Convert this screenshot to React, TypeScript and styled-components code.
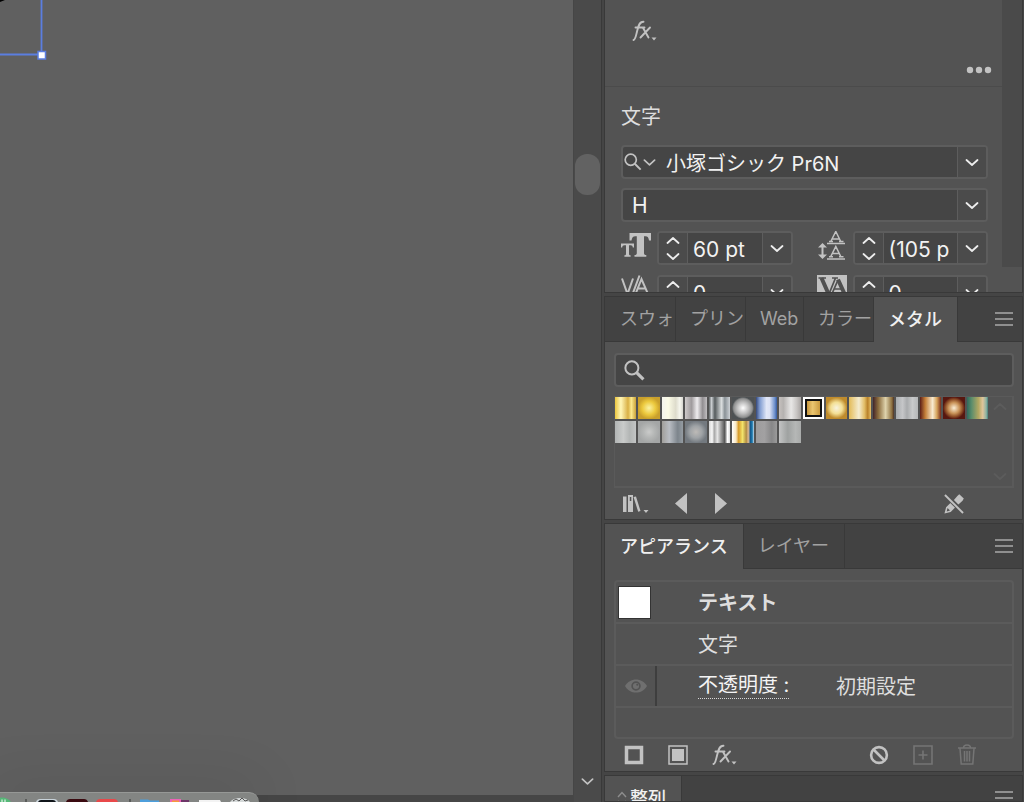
import React from "react";
import styled, { createGlobalStyle } from "styled-components";

const c = {
  canvas: "#606060",
  panel: "#535353",
  tabs: "#424242",
  gutter: "#454545",
  line: "#393939",
  edge: "#5d5d5d",
  field: "#454545",
  track: "#4a4a4a",
  icon: "#c2c2c2",
  text: "#dedede",
  dim: "#a2a2a2",
};

const GlobalStyle = createGlobalStyle`
  * { box-sizing: border-box; }
  body {
    margin: 0;
    background: ${c.canvas};
    color: ${c.text};
    font: 20px/28px Inter, "Noto Sans CJK JP", sans-serif;
  }
  svg { display: block; flex: none; }
  button, input, select { font: inherit; color: inherit; margin: 0; }
  h2 { margin: 0; font: inherit; }
`;

const Workspace = styled.div`
  display: flex;
  height: 100vh;
  overflow: hidden;
`;

const CanvasColumn = styled.main`
  flex: 1;
  min-width: 0;
  display: flex;
  flex-direction: column;
  position: relative;
  overflow: hidden;
`;

const Artboard = styled.div`
  flex: 1;
  background: ${c.canvas};
`;

const StatusStrip = styled.div`
  height: 7px;
  background: #464646;
`;

const Selection = styled.svg`
  position: absolute;
  left: 0;
  top: 0;
`;

const SystemDock = styled.div`
  position: absolute;
  left: -14px;
  bottom: 0;
  width: 273px;
  height: 10px;
  border-radius: 10px 10px 0 0;
  background: #838583;
  border-top: 1px solid #969896;
  box-shadow: 0 0 56px rgba(0, 0, 0, 0.3);
`;

const CanvasScroll = styled.div`
  width: 28px;
  flex: none;
  display: flex;
  flex-direction: column;
  justify-content: space-between;
  align-items: center;
  background: ${c.track};
  border-left: 1px solid #464646;
  padding: 154px 0 17px;
`;

const ScrollThumb = styled.div`
  width: 25px;
  height: 41px;
  border-radius: 12px;
  background: #626262;
`;

const PanelDock = styled.aside`
  width: 423px;
  flex: none;
  display: flex;
  flex-direction: column;
  gap: 3px;
  padding: 0 1px 0 2px;
  background: ${c.gutter};
  border-left: 1px solid ${c.line};
`;

const Panel = styled.section<{ $fill?: boolean }>`
  flex: ${(p) => (p.$fill ? "1 0 0" : "none")};
  min-height: 0;
  overflow: hidden;
  border: 1px solid ${c.line};
  background: ${c.panel};
`;

const PropertiesPanel = styled(Panel)`
  display: flex;
  height: 293px;
  border-top: 0;
`;

const PropertiesContent = styled.div`
  flex: 1;
  min-width: 0;
`;

const PropertiesScroll = styled.div`
  width: 20px;
  height: 267px;
  background: ${c.track};
`;

const EffectSection = styled.div`
  display: flex;
  flex-direction: column;
  align-items: flex-start;
  justify-content: space-between;
  height: 87px;
  padding: 20px 10px 12px 27px;
  border-bottom: 1px solid #4b4b4b;
`;

const CharacterSection = styled.div`
  display: flex;
  flex-direction: column;
  gap: 9px;
  padding: 16px 14px 0 16px;
`;

const SectionTitle = styled.h2`
  margin-bottom: 5px;
`;

const IconButton = styled.button<{ $end?: boolean; $push?: boolean }>`
  display: flex;
  align-items: center;
  justify-content: center;
  align-self: ${(p) => (p.$end ? "flex-end" : "auto")};
  margin-left: ${(p) => (p.$push ? "auto" : "0")};
  padding: 0;
  border: 0;
  background: none;
  color: ${c.icon};
  &:disabled { color: #757575; }
`;

const Field = styled.div`
  display: flex;
  flex: 1;
  min-width: 0;
  min-height: 34px;
  border: 2px solid ${c.edge};
  border-radius: 4px;
  background: ${c.field};
  overflow: hidden;
  color: #f2f2f2;
`;

const FieldInput = styled.input<{ $large?: boolean }>`
  flex: 1;
  min-width: 0;
  width: 0;
  height: 30px;
  border: 0;
  outline: 0;
  background: transparent;
  padding: ${(p) => (p.$large ? "3px 0 0 5px" : "0 0 0 10px")};
  font-size: ${(p) => (p.$large ? "21px" : "20px")};
`;

const StyleSelect = styled.select`
  flex: 1;
  min-width: 0;
  height: 30px;
  appearance: none;
  border: 0;
  outline: 0;
  background: transparent;
  padding: 1px 0 0 9px;
  font-size: 21px;
`;

const Addon = styled.button<{ $start?: boolean }>`
  display: flex;
  flex-direction: column;
  gap: 9px;
  align-items: center;
  justify-content: center;
  width: 29px;
  flex: none;
  padding: 0;
  border: 0 solid ${c.edge};
  border-width: ${(p) => (p.$start ? "0 1px 0 0" : "0 0 0 1px")};
  background: #4b4b4b;
  color: #ededed;
`;

const FontFilter = styled(IconButton)`
  width: 33px;
  gap: 1px;
`;

const MetricGrid = styled.div`
  display: grid;
  grid-template-columns: 1fr 1fr;
  gap: 10px 24px;
`;

const Metric = styled.label`
  display: flex;
  align-items: center;
  gap: 6px;
  color: ${c.icon};
`;

const TabBar = styled.div`
  display: flex;
  height: 45px;
  background: ${c.tabs};
`;

const TabRest = styled.div`
  flex: 1;
  display: flex;
  align-items: center;
  justify-content: flex-end;
  padding-right: 9px;
  border-bottom: 1px solid ${c.line};
`;

const Tab = styled.button<{ $active?: boolean; $tight?: boolean }>`
  display: flex;
  align-items: center;
  gap: 3px;
  min-width: 58px;
  padding: ${(p) => (p.$tight ? "0 1px 0 14px" : "0 15px 0 14px")};
  border: 0 solid ${c.line};
  border-width: ${(p) => (p.$active ? "0 1px 0 0" : "0 1px 1px 0")};
  background: ${(p) => (p.$active ? c.panel : c.tabs)};
  color: ${(p) => (p.$active ? "#f0f0f0" : c.dim)};
  font-size: 18px;
  font-weight: ${(p) => (p.$active ? 500 : 400)};
  white-space: nowrap;
  &:first-child { padding-left: 15px; }
`;

const CompactTab = styled(Tab)`
  &:first-child { padding-left: 12px; }
`;

const SwatchBody = styled.div`
  padding: 11px 8px 0 9px;
`;

const SearchField = styled.label`
  display: flex;
  align-items: center;
  height: 34px;
  padding-left: 8px;
  border: 2px solid ${c.edge};
  border-radius: 4px;
  background: ${c.field};
  color: ${c.icon};
`;

const SwatchBox = styled.div`
  display: flex;
  justify-content: space-between;
  height: 92px;
  margin-top: 9px;
  border: 2px solid #5a5a5a;
  border-left-width: 1px;
  border-top-width: 1px;
`;

const SwatchGrid = styled.div`
  flex: 1;
  display: grid;
  grid-template-columns: repeat(16, 1fr);
  grid-auto-rows: 22px;
  gap: 2px;
  align-content: start;
`;

const Swatch = styled.button<{ $paint: string; $selected?: boolean }>`
  padding: 0;
  border: ${(p) => (p.$selected ? "2px solid #fff" : "0")};
  box-shadow: ${(p) => (p.$selected ? "inset 0 0 0 2px #111" : "none")};
  background: ${(p) => p.$paint};
`;

const SwatchScroll = styled.div`
  width: 24px;
  display: flex;
  flex-direction: column;
  justify-content: space-between;
  align-items: center;
  padding: 6px 0;
  color: #5c5c5c;
`;

const PanelFooter = styled.div`
  display: flex;
  align-items: center;
  height: 31px;
`;

const SwatchFooter = styled(PanelFooter)`
  gap: 26px;
  padding: 0 58px 0 17px;
`;

const AppearanceFooter = styled(PanelFooter)`
  gap: 24px;
  padding: 0 45px 0 19px;
`;

const AppearanceBody = styled.div`
  padding: 11px 8px 0 9px;
`;

const AppearancePanel = styled(Panel)`
  padding-bottom: 1px;
`;

const AppearanceList = styled.div`
  border: 2px solid #5b5b5b;
  border-radius: 4px;
`;

const AppearanceRow = styled.div<{ $last?: boolean }>`
  display: grid;
  grid-template-columns: 41px 41px 138px 1fr;
  align-items: center;
  height: ${(p) => (p.$last ? "29px" : "42px")};
  border-bottom: ${(p) => (p.$last ? "0" : "2px solid #5b5b5b")};
`;

const Thumb = styled.span`
  width: 33px;
  height: 33px;
  margin-left: 2px;
  border: 1px solid #333;
  background: #fff;
`;

const Visibility = styled(IconButton)`
  align-self: stretch;
  border-right: 2px solid #3e3e3e;
  color: #6f6f6f;
`;

const RowName = styled.span<{ $bold?: boolean }>`
  grid-column: 3;
  padding-top: 2px;
  font-weight: ${(p) => (p.$bold ? 700 : 400)};
  white-space: nowrap;
`;

const RowValue = styled.span`
  padding-top: 2px;
`;

const OpacityLink = styled.a`
  grid-column: 3;
  justify-self: start;
  display: flex;
  line-height: 25px;
  color: #f4f4f4;
  text-decoration: none;
  border-bottom: 1px dotted #d8d8d8;
`;

const Chevron = ({ up = false, size = 14 }: { up?: boolean; size?: number }) => (
  <svg width={size} height="7" viewBox="0 0 14 7" fill="none" stroke="currentColor" strokeWidth="1.8" strokeLinecap="round" strokeLinejoin="round">
    <path d={up ? "M1.5 6 7 1l5.500 5" : "M1.500 1 7 6l5.500-5"} />
  </svg>
);

const Fx = () => (
  <svg width="26" height="22" viewBox="0 0 26 22" fill="none" stroke="currentColor" strokeWidth="1.900" strokeLinecap="round">
    <path d="M1.500 20C3.500 19.500 4 15.500 5 11.500S7 1.500 11.500 1.700M3.500 7.500h9M10.800 7.500l5.700 10M18 7.500 8.500 17.500" />
    <path d="M19.500 17.500h5L22 20.500z" fill="currentColor" stroke="none" />
  </svg>
);

const Dots = () => (
  <svg width="26" height="8" viewBox="0 0 26 8" fill="currentColor">
    <circle cx="4" cy="4" r="3.200" /><circle cx="13" cy="4" r="3.200" /><circle cx="22" cy="4" r="3.200" />
  </svg>
);

const Lens = ({ heavy = false }: { heavy?: boolean }) => (
  <svg width={heavy ? 21 : 18} height={heavy ? 21 : 18} viewBox="0 0 20 20" fill="none" stroke="currentColor" strokeWidth="1.900">
    <circle cx="7.500" cy="7.500" r="6.200" />
    <path d="m12 12 6.500 6.500" strokeWidth={heavy ? 3 : 2.200} />
  </svg>
);

const Menu = () => (
  <svg width="18" height="14" viewBox="0 0 18 14" stroke="#a9a9a9" strokeWidth="1.600">
    <path d="M0 1h18M0 7h18M0 13h18" />
  </svg>
);

const FontSizeIcon = () => (
  <svg width="30" height="34" viewBox="0 0 30 34" fill="currentColor">
    <path d="M8.500 2H30v7.500h-2C27.600 6.600 26.800 5.200 24.500 5.200H23V22c0 1.600.6 2 2.300 2v1.700H13.500V24c1.700 0 2.300-.4 2.300-2V5.200h-1.500c-2.300 0-3.400 1.400-3.800 4.300h-2z" />
    <path d="M0 12.500h13v4h-1.200c-.2-1.500-.7-2.200-2.200-2.200H8V23c0 1 .4 1.300 1.600 1.300v1.400H3.400v-1.400c1.200 0 1.600-.3 1.600-1.300v-8.700H3.400c-1.500 0-2 .7-2.200 2.200H0z" />
  </svg>
);

const LeadingIcon = () => (
  <svg width="30" height="34" viewBox="0 3 30 34" fill="none" stroke="currentColor" strokeWidth="1.500">
    <path d="M10 15.500h18M10 31h18M13.500 14 18.800 3.500 24 14M15 11h7.500M12 13.500h4M22 13.500h4.500M13.500 29 18.800 18.500 24 29M15 25.500h7.500M12 28.800h4M22 28.800h4.500" />
    <path d="M5.500 17v11" strokeWidth="2" />
    <path d="m1 19.500 4.500-4.500 4.500 4.500zM1 26.500l4.500 4.500 4.500-4.500z" fill="currentColor" stroke="none" />
  </svg>
);

const KerningIcon = () => (
  <svg width="30" height="34" viewBox="0 0 30 34" fill="none" stroke="currentColor" strokeWidth="2">
    <path d="m1 3.500 5.500 15.500 5.500-15.500M10.500 22 18.500 0.500M14.500 19 20.500 4 27 19M16.500 13.500h8" />
  </svg>
);

const TrackingIcon = () => (
  <svg width="30" height="34" viewBox="0 0 30 34">
    <path d="M0 0h30v28H0z" fill="currentColor" />
    <path d="m4.500 3 7.500 17M21 4.500 28.500 21" stroke="#505050" strokeWidth="4" />
    <path d="m12 19 6.500-16M14 21l7-16M17 14h9M1.500 3h7.500M15 3h6" stroke="#505050" strokeWidth="1.700" />
  </svg>
);

const LibraryIcon = () => (
  <svg width="27" height="18" viewBox="0 0 27 18" fill="currentColor">
    <path d="M1 1.500h3.500V17H1zM6 0h5v17H6zM11.500 2l2.500-.6L18.500 16l-2.300.8zM21.500 15h5L24 18z" />
    <path d="M7.800 2h1.500v4H7.800z" fill={c.panel} />
  </svg>
);

const Triangle = ({ right = false }: { right?: boolean }) => (
  <svg width="13" height="21" viewBox="0 0 13 21" fill="currentColor">
    <path d={right ? "M1 0 13 10.500 1 21z" : "M12 0 0 10.500 12 21z"} />
  </svg>
);

const NoEditIcon = () => (
  <svg width="20" height="20" viewBox="0 0 21 21" fill="currentColor">
    <path d="m14 2 2-1.800 4.800 4.500-1.300 2.300-4.400 4-4.700-4.700zM8.300 8 13.200 12.700 7 18.800.5 20.500 2.200 14z" />
    <path d="m3.700 14.800 2.600 2.600-3.500 1z" fill={c.panel} />
    <path d="m1 1 19 19" stroke={c.panel} strokeWidth="4" />
    <path d="m1 1 19 19" stroke="currentColor" strokeWidth="2" />
  </svg>
);

const EyeIcon = () => (
  <svg width="22" height="14" viewBox="0 0 22 14">
    <path d="M0 7C5-1.800 17-1.800 22 7c-5 8.800-17 8.800-22 0z" fill="currentColor" />
    <circle cx="11" cy="7" r="3.900" fill="none" stroke={c.panel} strokeWidth="1.700" />
    <circle cx="12.200" cy="5.800" r="1" fill={c.panel} />
  </svg>
);

const StrokeIcon = () => (
  <svg width="20" height="20" viewBox="0 0 20 20" fill="none" stroke="currentColor">
    <path d="M2.500 2.500h15v15h-15z" strokeWidth="3.500" />
  </svg>
);

const FillIcon = () => (
  <svg width="20" height="20" viewBox="0 0 20 20" fill="none" stroke="currentColor" strokeWidth="1.500">
    <path d="M1 1h18v18H1z" />
    <path d="M4 4h12v12H4z" fill="currentColor" stroke="none" />
  </svg>
);

const ClearIcon = () => (
  <svg width="20" height="20" viewBox="0 0 20 20" fill="none" stroke="currentColor" strokeWidth="2.600">
    <circle cx="10" cy="10" r="7.900" /><path d="m4.500 4.500 11 11" />
  </svg>
);

const AddIcon = () => (
  <svg width="20" height="20" viewBox="0 0 20 20" fill="none" stroke="currentColor" strokeWidth="1.600">
    <path d="M1 1h18v18H1zM10 5.500v9M5.500 10h9" />
  </svg>
);

const TrashIcon = () => (
  <svg width="20" height="21" viewBox="0 0 20 21" fill="none" stroke="currentColor" strokeWidth="1.500">
    <path d="M1 4h18M6.500 4c0-4 7-4 7 0M3 4.500 4.200 20h11.600L17 4.500M7.500 7v10.500M10 7v10.500M12.500 7v10.500" />
  </svg>
);

const UpDownIcon = () => (
  <svg width="10" height="16" viewBox="0 0 10 16" fill="none" stroke="#8d8d8d" strokeWidth="1.400">
    <path d="m1 6 4-4.500L9 6M1 10l4 4.500L9 10" />
  </svg>
);

const linear = (...stops: string[]) => `linear-gradient(90deg, ${stops.join(", ")})`;
const radial = (...stops: string[]) => `radial-gradient(circle closest-side, ${stops.join(", ")})`;

const swatches: { name: string; paint: string }[] = [
  { name: "ゴールド 1", paint: linear("#ecc63e", "#fff6b8 28%", "#d9b045 62%", "#fbe88c 78%", "#caa238") },
  { name: "ゴールド 2", paint: radial("#fbf3a4", "#ecc93d 60%", "#c9a02c") },
  { name: "プラチナ", paint: linear("#f4f4ee", "#fbfbe6 30%", "#dedccc 65%", "#f6f6ee 85%", "#d5d5cf") },
  { name: "シルバー 1", paint: linear("#cdc9ca", "#9f9b9d 30%", "#eeecee 55%", "#928f92 80%", "#c0bec0") },
  { name: "シルバー 2", paint: linear("#5f6466", "#c9cdd0 12%", "#555b5d 28%", "#dadedf 60%", "#8a9297 75%", "#cdd2d6") },
  { name: "シルバー 3", paint: radial("#fff", "#bbb 55%", "#8f9090 85%", "#4d5153") },
  { name: "ブルー", paint: linear("#35497b", "#7f9bd0 18%", "#e1e7f7 50%", "#dce2f4 65%", "#6b8fcb 90%", "#35599c") },
  { name: "スチール 1", paint: linear("#c5c0bd", "#b5b2b0 20%", "#e8e7e6 55%", "#c9c6c4 80%", "#a8a4a2") },
  { name: "ゴールド 3", paint: linear("#b9852b", "#ebc670 45%", "#c08e32") },
  { name: "ゴールド 4", paint: radial("#f8f3df", "#f3df94 55%", "#bf8b2c") },
  { name: "ゴールド 5", paint: linear("#e3bb58", "#f4ecd0 45%", "#e2be68 70%", "#b9822a 85%", "#e6c06a") },
  { name: "ブロンズ 1", paint: linear("#43252a", "#8a6b3c 25%", "#dfd3ad 60%", "#8c6f3e 90%", "#4c3226") },
  { name: "スチール 2", paint: linear("#a8abad", "#c5c6c8 30%", "#a9abad 50%", "#c9cacb 75%", "#b5b7b8") },
  { name: "カッパー 1", paint: linear("#5c1d17", "#c37e38 25%", "#f8ead0 60%", "#d6a55e 80%", "#7a2d1b") },
  { name: "カッパー 2", paint: radial("#fbeed6", "#c99359 50%", "#8a4a25 80%", "#571710") },
  { name: "レインボー 1", paint: linear("#2f6a5c", "#5c8d6c 22%", "#b3a862 55%", "#e0c59b 75%", "#8bb2a3 92%", "#477e78") },
  { name: "スチール 3", paint: linear("#b1b4b4", "#c9cbca 40%", "#b3b6b5 70%", "#c3c5c5") },
  { name: "スチール 4", paint: radial("#cacbca", "#b5b7b6 50%", "#a4a6a6") },
  { name: "スチール 5", paint: linear("#a19f9b", "#b9bdc3 35%", "#7d858c 75%", "#959ca2") },
  { name: "スチール 6", paint: radial("#bdbab7", "#9fa3a6 55%", "#73797f") },
  { name: "クローム", paint: linear("#d5d5d5", "#f8f8f8 15%", "#a7a7a7 25%", "#e6e6e6 40%", "#999 58%", "#555 75%", "#fff 88%", "#ddd") },
  { name: "レインボー 2", paint: linear("#fff", "#f8e8c4 18%", "#d79b29 30%", "#f2e46c 48%", "#b28d42 65%", "#e0b98f 74%", "#14598d 84%", "#1c7bae 92%", "#cde") },
  { name: "グレー 1", paint: linear("#9d9c9d", "#a2a1a2 40%", "#878788 75%", "#9a9a9a") },
  { name: "グレー 2", paint: linear("#c3c4c4", "#9fa2a1 40%", "#b5b7b6 75%", "#a9abaa") },
];

const MetricField = ({ icon, name, value }: { icon: React.ReactNode; name: string; value: string }) => (
  <Metric>
    {icon}
    <Field>
      <Addon $start aria-label={`${name}を増減`}><Chevron up /><Chevron /></Addon>
      <FieldInput $large aria-label={name} defaultValue={value} />
      <Addon aria-label={`${name}の一覧`}><Chevron /></Addon>
    </Field>
  </Metric>
);

const PanelMenu = () => (
  <TabRest><IconButton aria-label="パネルメニュー"><Menu /></IconButton></TabRest>
);

export default function App() {
  return (
    <>
      <GlobalStyle />
      <Workspace>
        <CanvasColumn>
          <Artboard />
          <StatusStrip />
          <Selection width="50" height="62" viewBox="0 0 50 62" fill="none">
            <path d="M0 0h5L0 2z" fill="#000" />
            <path d="M41.500 0v54.500H0" stroke="#5b7ee0" strokeWidth="1.800" />
            <path d="M38 51.500h7.500v7.500H38z" fill="#fff" stroke="#5b7ee0" strokeWidth="1.500" />
          </Selection>
          <SystemDock>
            <svg width="273" height="9" viewBox="-14 0 273 9">
              <path d="M-6 9C-3 3 7 3 11 9z" fill="#55b877" />
              <path d="M2 9V6.500M5 9V6.500" stroke="#fff" />
              <path d="M26 6v3M130 6v3" stroke="#4d4f4d" strokeWidth="1.500" />
              <path d="M36 9q1-3 4-3h14q3 0 4 3z" fill="#c9d3da" />
              <path d="M38 9q1-2 3-2h12q2 0 3 2z" fill="#10151a" />
              <path d="M66 9q1-3 4-3h14q3 0 4 3z" fill="#3a0a10" />
              <path d="M96 9q1-3 4-3h14q3 0 4 3z" fill="#e8484a" />
              <path d="M140 9V6.500h8l2 1h9V9z" fill="#4d9fdc" />
              <path d="M170 9V6h11v3z" fill="#ee62b8" />
              <path d="M172 9V7.500h7V9z" fill="#f59a3c" />
              <path d="M181 9V7h8v2z" fill="#6d3768" />
              <path d="M199 9V7h21l1 2z" fill="#f3f3f3" />
              <path d="M230 9q3-4 10-4t10 4z" fill="#d5d9d9" />
              <path d="m233 8 3-2 3 2 3-3 3 3 3-1" stroke="#555" fill="none" />
            </svg>
          </SystemDock>
        </CanvasColumn>

        <CanvasScroll>
          <ScrollThumb />
          <IconButton aria-label="下へスクロール"><Chevron size={13} /></IconButton>
        </CanvasScroll>

        <PanelDock>
          <PropertiesPanel>
            <PropertiesContent>
              <EffectSection>
                <IconButton aria-label="効果を選択"><Fx /></IconButton>
                <IconButton $end aria-label="その他のオプション"><Dots /></IconButton>
              </EffectSection>
              <CharacterSection>
                <SectionTitle>文字</SectionTitle>
                <Field>
                  <FontFilter aria-label="フォント検索"><Lens /><Chevron size={13} /></FontFilter>
                  <FieldInput aria-label="フォントファミリ" defaultValue="小塚ゴシック Pr6N" />
                  <Addon aria-label="フォント一覧"><Chevron /></Addon>
                </Field>
                <Field>
                  <StyleSelect aria-label="フォントスタイル" defaultValue="H">
                    <option>H</option>
                  </StyleSelect>
                  <Addon aria-label="スタイル一覧"><Chevron /></Addon>
                </Field>
                <MetricGrid>
                  <MetricField icon={<FontSizeIcon />} name="フォントサイズ" value="60 pt" />
                  <MetricField icon={<LeadingIcon />} name="行送り" value="(105 p" />
                  <MetricField icon={<KerningIcon />} name="カーニング" value="0" />
                  <MetricField icon={<TrackingIcon />} name="トラッキング" value="0" />
                </MetricGrid>
              </CharacterSection>
            </PropertiesContent>
            <PropertiesScroll />
          </PropertiesPanel>

          <Panel>
            <TabBar>
              <Tab $tight>スウォ</Tab>
              <Tab $tight>プリン</Tab>
              <Tab $tight>Web</Tab>
              <Tab $tight>カラー</Tab>
              <Tab $active>メタル</Tab>
              <PanelMenu />
            </TabBar>
            <SwatchBody>
              <SearchField>
                <Lens heavy />
                <FieldInput aria-label="スウォッチを検索" />
              </SearchField>
              <SwatchBox>
                <SwatchGrid>
                  {swatches.map((s, i) => (
                    <Swatch key={s.name} aria-label={s.name} $paint={s.paint} $selected={i === 8} />
                  ))}
                </SwatchGrid>
                <SwatchScroll><Chevron up /><Chevron /></SwatchScroll>
              </SwatchBox>
            </SwatchBody>
            <SwatchFooter>
              <IconButton aria-label="スウォッチライブラリ"><LibraryIcon /></IconButton>
              <IconButton aria-label="前へ"><Triangle /></IconButton>
              <IconButton aria-label="次へ"><Triangle right /></IconButton>
              <IconButton $push aria-label="編集不可"><NoEditIcon /></IconButton>
            </SwatchFooter>
          </Panel>

          <AppearancePanel>
            <TabBar>
              <Tab $active>アピアランス</Tab>
              <Tab>レイヤー</Tab>
              <PanelMenu />
            </TabBar>
            <AppearanceBody>
              <AppearanceList>
                <AppearanceRow><Thumb /><RowName $bold>テキスト</RowName></AppearanceRow>
                <AppearanceRow><RowName>文字</RowName></AppearanceRow>
                <AppearanceRow>
                  <Visibility aria-label="表示の切り替え"><EyeIcon /></Visibility>
                  <OpacityLink href="#opacity">不透明度 :</OpacityLink>
                  <RowValue>初期設定</RowValue>
                </AppearanceRow>
                <AppearanceRow $last />
              </AppearanceList>
            </AppearanceBody>
            <AppearanceFooter>
              <IconButton aria-label="新規線を追加"><StrokeIcon /></IconButton>
              <IconButton aria-label="新規塗りを追加"><FillIcon /></IconButton>
              <IconButton aria-label="新規効果を追加"><Fx /></IconButton>
              <IconButton $push aria-label="アピアランスを消去"><ClearIcon /></IconButton>
              <IconButton disabled aria-label="項目を複製"><AddIcon /></IconButton>
              <IconButton disabled aria-label="項目を削除"><TrashIcon /></IconButton>
            </AppearanceFooter>
          </AppearancePanel>

          <Panel $fill>
            <TabBar>
              <CompactTab $active><UpDownIcon />整列</CompactTab>
              <PanelMenu />
            </TabBar>
          </Panel>
        </PanelDock>
      </Workspace>
    </>
  );
}
